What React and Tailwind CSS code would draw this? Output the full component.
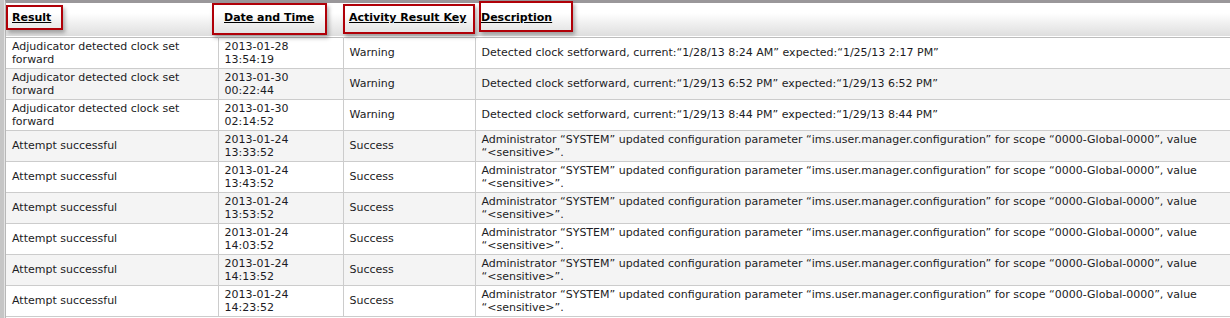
import React from 'react';

const ADMIN = 'Administrator “SYSTEM” updated configuration parameter “ims.user.manager.configuration” for scope “0000-Global-0000”, value “<sensitive>”.';

const rows = [
  { result: 'Adjudicator detected clock set forward', date: '2013-01-28', time: '13:54:19', key: 'Warning', desc: 'Detected clock setforward, current:“1/28/13 8:24 AM” expected:“1/25/13 2:17 PM”' },
  { result: 'Adjudicator detected clock set forward', date: '2013-01-30', time: '00:22:44', key: 'Warning', desc: 'Detected clock setforward, current:“1/29/13 6:52 PM” expected:“1/29/13 6:52 PM”' },
  { result: 'Adjudicator detected clock set forward', date: '2013-01-30', time: '02:14:52', key: 'Warning', desc: 'Detected clock setforward, current:“1/29/13 8:44 PM” expected:“1/29/13 8:44 PM”' },
  { result: 'Attempt successful', date: '2013-01-24', time: '13:33:52', key: 'Success', desc: ADMIN },
  { result: 'Attempt successful', date: '2013-01-24', time: '13:43:52', key: 'Success', desc: ADMIN },
  { result: 'Attempt successful', date: '2013-01-24', time: '13:53:52', key: 'Success', desc: ADMIN },
  { result: 'Attempt successful', date: '2013-01-24', time: '14:03:52', key: 'Success', desc: ADMIN },
  { result: 'Attempt successful', date: '2013-01-24', time: '14:13:52', key: 'Success', desc: ADMIN },
  { result: 'Attempt successful', date: '2013-01-24', time: '14:23:52', key: 'Success', desc: ADMIN },
];

const headers = ['Result', 'Date and Time', 'Activity Result Key', 'Description'];

const App = () => {
  return (
    <div className="w-[1230px] h-[318px] overflow-hidden bg-white flex font-['DejaVu_Sans',Verdana,sans-serif] text-[11px] leading-[13px] text-[#1c1c24]">
      <div className="w-[5px] shrink-0 bg-[#c6c6c6] border-r border-[#e4e4e4]" />
      <div className="flex-1 relative border-t-[3px] border-[#9a979a] border-l border-l-[#b8b8b8]">
        <table className="w-full table-fixed border-collapse">
          <colgroup>
            <col className="w-[212px]" />
            <col className="w-[125px]" />
            <col className="w-[132px]" />
            <col />
          </colgroup>
          <thead>
            <tr className="h-[34px] bg-gradient-to-b from-white from-30% to-[#dedede] border-b border-[#bdbdbd]">
              {headers.map((h) => (
                <th key={h} className="text-left font-bold text-black underline px-[6px] pb-[4px] align-middle">
                  {h}
                </th>
              ))}
            </tr>
          </thead>
          <tbody>
            {rows.map((r, i) => (
              <tr key={i} className={`h-[31px] border-b border-[#cccccc] ${i % 2 === 1 ? 'bg-[#f4f4f4]' : 'bg-white'}`}>
                <td className="px-[6px] align-middle">{r.result}</td>
                <td className="px-[6px] align-middle border-l border-[#cccccc]">
                  {r.date}
                  <br />
                  {r.time}
                </td>
                <td className="px-[6px] align-middle border-l border-[#cccccc]">{r.key}</td>
                <td className="px-[6px] align-middle border-l border-[#cccccc]">{r.desc}</td>
              </tr>
            ))}
          </tbody>
        </table>

        {/* red annotation boxes over the header */}
        <div className="absolute left-0 top-[2px] w-[57px] h-[25px] border-2 border-[#b00008] shadow-[2px_3px_4px_rgba(0,0,0,0.3)]" />
        <div className="absolute left-[206px] top-0 w-[115px] h-[32px] border-2 border-[#b00008] shadow-[2px_3px_4px_rgba(0,0,0,0.3)]" />
        <div className="absolute left-[337px] top-[1px] w-[132px] h-[30px] border-2 border-[#b00008] shadow-[2px_3px_4px_rgba(0,0,0,0.3)]" />
        <div className="absolute left-[473px] top-[-2px] w-[94px] h-[31px] border-2 border-[#b00008] shadow-[2px_3px_4px_rgba(0,0,0,0.3)]" />
      </div>
    </div>
  );
};

export default App;
